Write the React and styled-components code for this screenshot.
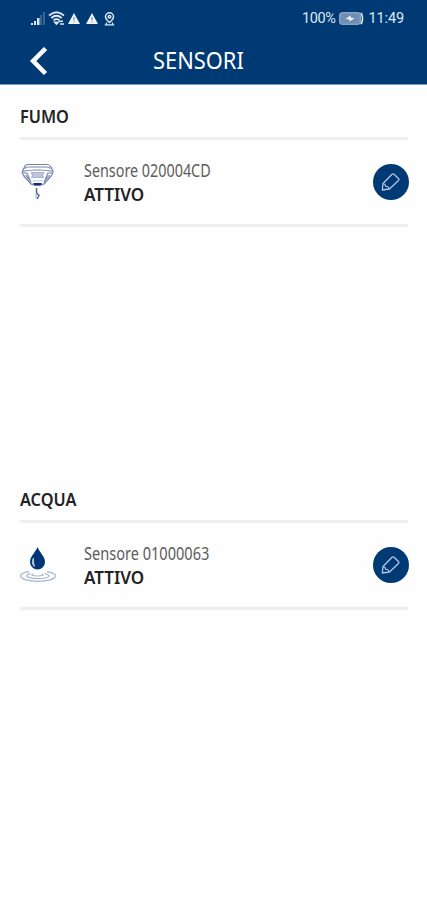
import React from 'react';
import styled, { createGlobalStyle } from 'styled-components';

const GlobalStyle = createGlobalStyle`
  * {
    box-sizing: border-box;
  }

  body {
    margin: 0;
    background: #fefefe;
    font-family: 'Noto Sans', 'Open Sans', sans-serif;
  }
`;

const Screen = styled.div`
  min-height: 900px;
  background: #fefefe;
`;

const Header = styled.header`
  height: 85px;
  background: #003a75;
  border-bottom: 1px solid #7f9cba;
  color: #fff;
`;

const StatusBar = styled.div`
  display: flex;
  align-items: center;
  justify-content: space-between;
  height: 37px;
  padding: 0 23px 0 30px;
  color: #dfe7f3;
`;

const StatusGroup = styled.div`
  display: flex;
  align-items: center;
  gap: ${(props) => props.$gap || 0}px;
`;

const StatusText = styled.span`
  font-family: Roboto, sans-serif;
  font-size: 14.5px;
  line-height: 20px;
  padding-top: 1px;
  letter-spacing: ${(props) => props.$spacing || 0}px;
`;

const NavBar = styled.div`
  display: flex;
  align-items: center;
  height: 47px;
  padding-left: 29px;
`;

const BackButton = styled.button`
  display: flex;
  width: 20px;
  height: 30px;
  padding: 0;
  border: none;
  background: none;
  color: #fff;
  cursor: pointer;
`;

// Keeps the letters narrow, the width is a factor of the normal one
const Condensed = styled.span`
  display: inline-block;
  transform: scaleX(${(props) => props.$width});
  transform-origin: left center;
  white-space: nowrap;
`;

const Title = styled.h1`
  margin: -2px 0 0 104px;
  font-size: 23px;
  font-weight: 400;
  line-height: 30px;
`;

const Content = styled.main`
  padding-top: 17px;
`;

const Section = styled.section`
  height: 383px;
  padding: 0 19px 0 20px;
`;

const SectionTitle = styled.h2`
  margin: 0;
  height: 35px;
  color: #222;
  font-size: 18px;
  font-weight: 600;
  line-height: 29px;
`;

const SensorRow = styled.div`
  display: flex;
  align-items: center;
  height: 90px;
  border-top: 3px solid #eeeeef;
  border-bottom: 3px solid #eeeeef;
`;

const SensorIcon = styled.div`
  display: flex;
  width: 64px;
`;

const SensorInfo = styled.div`
  flex: 1;
  display: flex;
  flex-direction: column;
`;

const SensorName = styled.div`
  color: #5c5c5c;
  font-size: 17.5px;
  font-weight: 400;
  line-height: 24px;
`;

const SensorState = styled.div`
  color: #222;
  font-size: 18px;
  font-weight: 600;
  line-height: 24px;
`;

const EditButton = styled.button`
  display: flex;
  align-items: center;
  justify-content: center;
  width: 36px;
  height: 36px;
  margin-right: -1px;
  padding: 0;
  border: none;
  border-radius: 50%;
  background: #003a75;
  color: #b5c5de;
  cursor: pointer;
`;

const SignalIcon = () => (
  <svg width="16" height="14" viewBox="0 0 16 14" fill="currentColor">
    <path d="M1 11h2v2H1zM4 9h2v4H4zM7 6h2.500v7H7z" />
    <path d="M10 3h2v10h-2zM13 0h2v13h-2z" opacity="0.25" />
  </svg>
);

const WifiIcon = () => (
  <svg width="18" height="15" viewBox="0 0 18 15" fill="none" stroke="currentColor" strokeWidth="1.800">
    <path d="M1 4.500Q8.500-2 16 4.500M3.300 7Q8.500 2.600 13.700 7M5.500 9.400Q8.500 6.900 11.500 9.400" />
    <path d="M7 11.300h3L8.500 13z" fill="currentColor" />
    <path d="M11 10.300h4M12 13h4" strokeWidth="1.600" />
  </svg>
);

const WarningIcon = () => (
  <svg width="12" height="11" viewBox="0 0 12 11">
    <path d="M6 0l6 11H0z" fill="#f1f5fb" />
    <path d="M6 4v3.500M6 8.500v1" stroke="#587ba5" strokeWidth="1" />
  </svg>
);

const LocationIcon = () => (
  <svg width="11" height="14" viewBox="0 0 11 14" fill="none" stroke="currentColor" strokeWidth="1.500">
    <path d="M5.500 10.500C3 8.500 1.500 7 1.500 4.800a4 4 0 0 1 8 0c0 2.200-1.500 3.700-4 5.700z" />
    <circle cx="5.500" cy="4.800" r="1.300" />
    <path d="M3 10.500l-1.500 2.300h8L8 10.500" strokeWidth="1.200" />
  </svg>
);

const BatteryIcon = () => (
  <svg width="25" height="13" viewBox="0 0 25 13">
    <rect x="0.700" y="0.700" width="20.600" height="11.600" rx="2" fill="#6f8eb3" stroke="#a6bad3" />
    <path d="M21.500 1.500h1q2 5 0 10h-1" fill="none" stroke="#dfe7f3" strokeWidth="1.600" />
    <path d="M6.500 7l5-3.500v2l4 .7-5 3.300V7.500z" fill="#f0f5fb" />
  </svg>
);

const BackIcon = () => (
  <svg width="20" height="30" viewBox="0 0 20 30" fill="none" stroke="currentColor" strokeWidth="4.600">
    <path d="M16.500 2.500L4.200 15l12.300 12.500" />
  </svg>
);

const PencilIcon = () => (
  <svg width="20" height="20" viewBox="0 0 20 20" fill="none" stroke="currentColor" strokeWidth="1.300" strokeLinejoin="round">
    <path d="M1.300 18l.7-6.500L11 2.300q1-.9 2 0l4.500 4.200q.9 1 0 2L8.500 17z" />
    <path d="M2 11.800q2.500 0 2.500 2.500 3-.3 3.500 2.500" strokeWidth="1.100" />
  </svg>
);

const SmokeIcon = () => (
  <svg width="36" height="38" viewBox="0 0 36 38" fill="none" stroke="#7583ad" strokeWidth="1.200">
    <path d="M8 1.500h19q2.500 0 4 2.500l2 4q.5 2-1.500 4.500l-7 8q-1.500 1.500-7 1.500t-7-1.500l-7-8Q1.500 10 2.500 8l2-4Q5.500 1.500 8 1.500z" />
    <path d="M4.500 5.500Q6 4 9 4h17q3 0 4.500 1.500M2.800 8.500Q8 7 17.500 7t15 1.500" />
    <path d="M3 10h4l4 9.500M32 10h-4l-4 9.500M5.500 12l4 5M29.500 12l-4 5" />
    <path d="M11 9.500h13l-1.500 2.500 1 2.500h-12l1-2.500z" fill="#bec6da" stroke="#9ba6c4" strokeWidth="0.800" />
    <path d="M12.500 17.500q5 1 10 0" stroke="#c5ccdf" />
    <path d="M13 20h9l-1.500 2.500h-6z" fill="#172b7c" stroke="none" />
    <path d="M16.500 25v5l2.500 2.500-2 3.500" stroke="#52659c" strokeWidth="1.500" />
    <path d="M16 31v4" stroke="#adb6cf" />
  </svg>
);

const WaterIcon = () => (
  <svg width="36" height="38" viewBox="0 0 36 38" fill="none">
    <g stroke="#a8b5ce" strokeWidth="1.200">
      <path d="M9 25.700C3.500 26.500 0 28 0.700 30.500 1.500 33 8 35.300 18 35.300s16.500-2.300 17.300-4.800c.7-2.500-3-4-8.300-4.800" />
      <path d="M10.500 27.500C3.500 29.500 7 32.700 18 32.700s14-3.200 7-5.200" />
      <path d="M13 27.800c-3 1 0 2.200 4.500 2.200s7.500-1.200 4.500-2.200" />
    </g>
    <path d="M17.500 1c1.500 5 7.500 9 7.500 15a7.500 7.500 0 0 1-15 0c0-6 6-10 7.500-15z" fill="#003676" />
    <path d="M13.500 12q-2.600 5 .8 8.500-1-4-.8-8.500z" fill="#dce5f1" stroke="#b7c8df" strokeWidth="1" />
  </svg>
);

const sensors = [
  { group: 'FUMO', name: 'Sensore 020004CD', nameWidth: 0.82, state: 'ATTIVO', Icon: SmokeIcon },
  { group: 'ACQUA', name: 'Sensore 01000063', nameWidth: 0.832, state: 'ATTIVO', Icon: WaterIcon },
];

function App() {
  return (
    <Screen>
      <GlobalStyle />
      <Header>
        <StatusBar>
          <StatusGroup $gap={6}>
            <StatusGroup $gap={2}>
              <SignalIcon />
              <WifiIcon />
              <WarningIcon />
            </StatusGroup>
            <WarningIcon />
            <LocationIcon />
          </StatusGroup>
          <StatusGroup $gap={4}>
            <StatusText $spacing={-0.4}>100%</StatusText>
            <BatteryIcon />
            <StatusText $spacing={-0.1}>11:49</StatusText>
          </StatusGroup>
        </StatusBar>
        <NavBar>
          <BackButton aria-label="Indietro">
            <BackIcon />
          </BackButton>
          <Title>
            <Condensed $width={0.95}>SENSORI</Condensed>
          </Title>
        </NavBar>
      </Header>
      <Content>
        {sensors.map(({ group, name, nameWidth, state, Icon }) => (
          <Section key={group}>
            <SectionTitle>
              <Condensed $width={0.905}>{group}</Condensed>
            </SectionTitle>
            <SensorRow>
              <SensorIcon>
                <Icon />
              </SensorIcon>
              <SensorInfo>
                <SensorName>
                  <Condensed $width={nameWidth}>{name}</Condensed>
                </SensorName>
                <SensorState>
                  <Condensed $width={0.945}>{state}</Condensed>
                </SensorState>
              </SensorInfo>
              <EditButton aria-label="Modifica">
                <PencilIcon />
              </EditButton>
            </SensorRow>
          </Section>
        ))}
      </Content>
    </Screen>
  );
}

export default App;
